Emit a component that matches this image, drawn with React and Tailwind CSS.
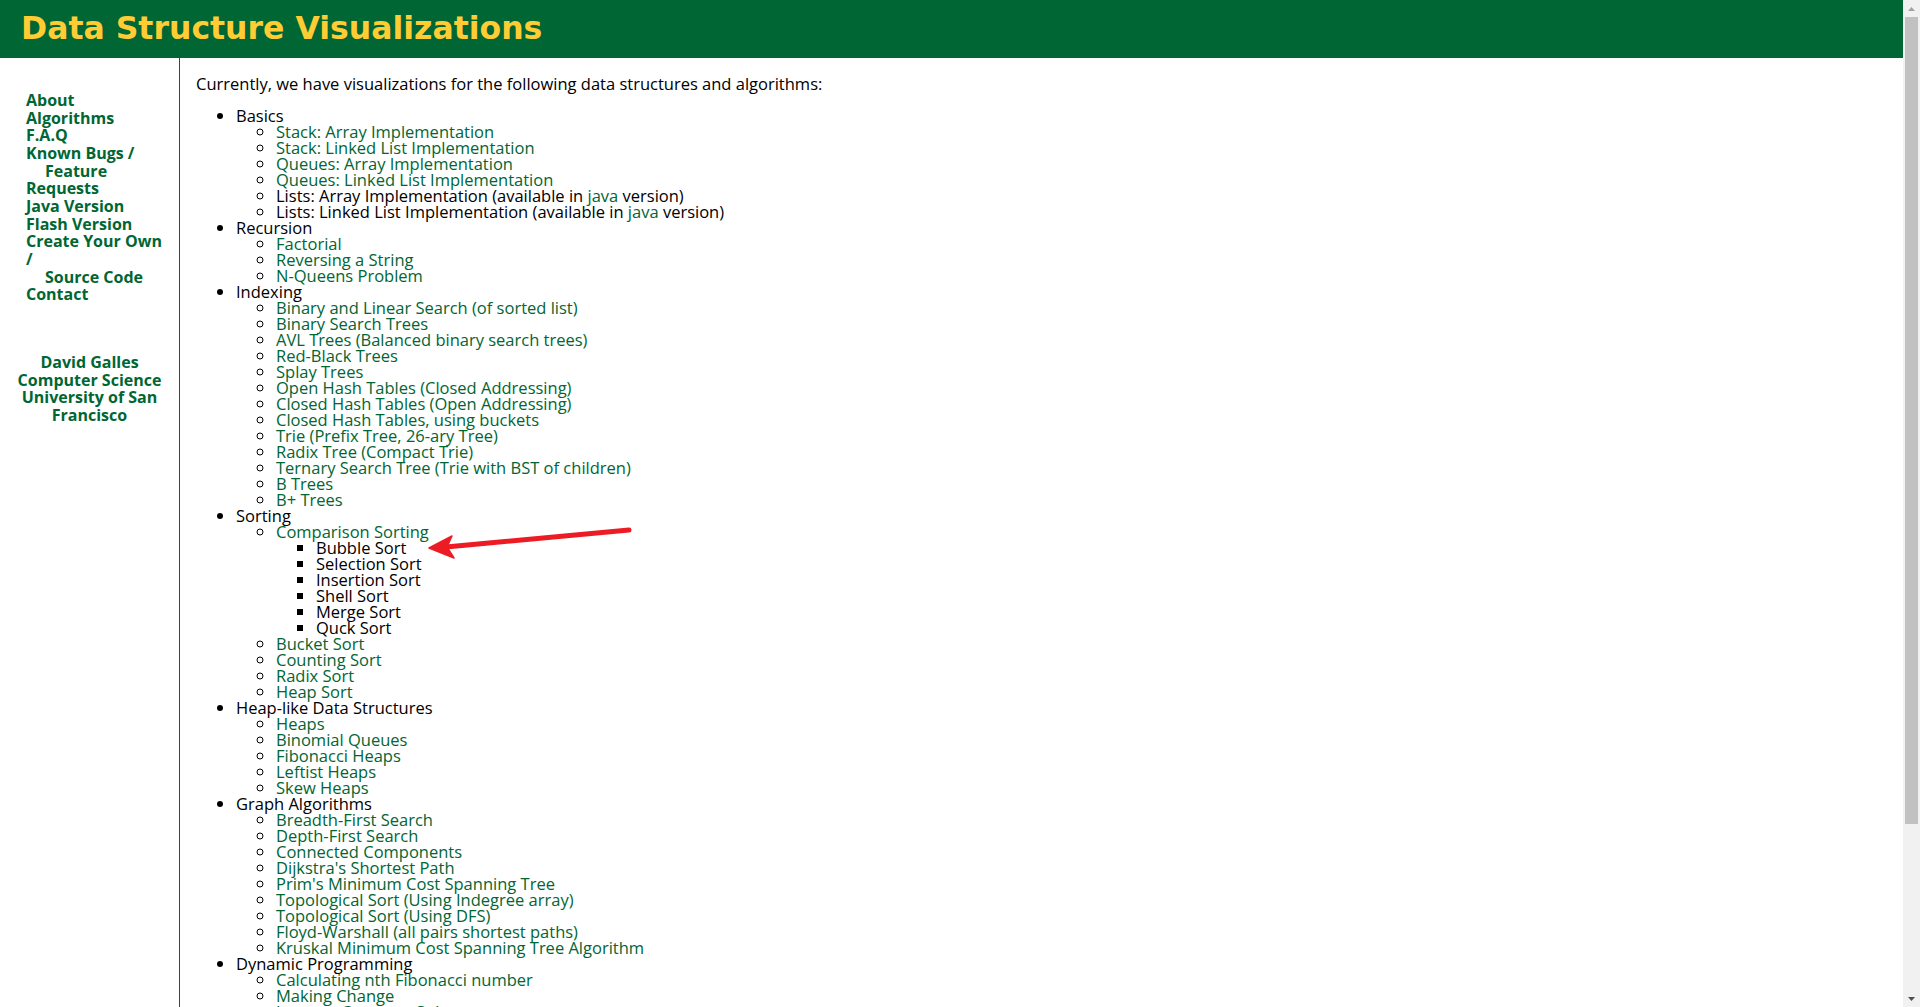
import React from 'react';

// plain strings are links, { parts: [...] } mixes black text and links
const sections = [
  {
    title: 'Basics',
    items: [
      'Stack: Array Implementation',
      'Stack: Linked List Implementation',
      'Queues: Array Implementation',
      'Queues: Linked List Implementation',
      { parts: ['Lists: Array Implementation (available in ', { link: 'java' }, ' version)'] },
      { parts: ['Lists: Linked List Implementation (available in ', { link: 'java' }, ' version)'] },
    ],
  },
  {
    title: 'Recursion',
    items: ['Factorial', 'Reversing a String', 'N-Queens Problem'],
  },
  {
    title: 'Indexing',
    items: [
      'Binary and Linear Search (of sorted list)',
      'Binary Search Trees',
      'AVL Trees (Balanced binary search trees)',
      'Red-Black Trees',
      'Splay Trees',
      'Open Hash Tables (Closed Addressing)',
      'Closed Hash Tables (Open Addressing)',
      'Closed Hash Tables, using buckets',
      'Trie (Prefix Tree, 26-ary Tree)',
      'Radix Tree (Compact Trie)',
      'Ternary Search Tree (Trie with BST of children)',
      'B Trees',
      'B+ Trees',
    ],
  },
  {
    title: 'Sorting',
    items: [
      {
        link: 'Comparison Sorting',
        sub: ['Bubble Sort', 'Selection Sort', 'Insertion Sort', 'Shell Sort', 'Merge Sort', 'Quck Sort'],
      },
      'Bucket Sort',
      'Counting Sort',
      'Radix Sort',
      'Heap Sort',
    ],
  },
  {
    title: 'Heap-like Data Structures',
    items: ['Heaps', 'Binomial Queues', 'Fibonacci Heaps', 'Leftist Heaps', 'Skew Heaps'],
  },
  {
    title: 'Graph Algorithms',
    items: [
      'Breadth-First Search',
      'Depth-First Search',
      'Connected Components',
      "Dijkstra's Shortest Path",
      "Prim's Minimum Cost Spanning Tree",
      'Topological Sort (Using Indegree array)',
      'Topological Sort (Using DFS)',
      'Floyd-Warshall (all pairs shortest paths)',
      'Kruskal Minimum Cost Spanning Tree Algorithm',
    ],
  },
  {
    title: 'Dynamic Programming',
    items: ['Calculating nth Fibonacci number', 'Making Change', 'Longest Common Subsequence'],
  },
  {
    title: 'Geometric Algorithms',
    items: ['2D Rotation and Scale Matrices', '2D Rotation and Translation Matrices'],
  },
];

const Link = ({ children }) => <a className="text-[#006633] cursor-pointer">{children}</a>;

function Item({ item }) {
  if (typeof item === 'string') {
    return <li><Link>{item}</Link></li>;
  }
  if (item.parts) {
    return (
      <li>
        {item.parts.map((p, i) => (typeof p === 'string' ? <span key={i}>{p}</span> : <Link key={i}>{p.link}</Link>))}
      </li>
    );
  }
  return (
    <li>
      <Link>{item.link}</Link>
      <ul className="list-[square] pl-10">
        {item.sub.map((s) => (
          <li key={s}>{s}</li>
        ))}
      </ul>
    </li>
  );
}

const navLinks = [
  ['About'],
  ['Algorithms'],
  ['F.A.Q'],
  ['Known Bugs /', 'Feature', 'Requests'],
  ['Java Version'],
  ['Flash Version'],
  ['Create Your Own', '/', 'Source Code'],
  ['Contact'],
];

function Sidebar() {
  return (
    <div className="w-[180px] shrink-0 border-r border-[#006633] font-['Open_Sans',sans-serif] font-bold text-[16px] leading-[17.67px] text-[#006633]">
      <div className="pt-[34px] pl-[26px]">
        {navLinks.map((lines) => (
          <a key={lines[0]} className="block cursor-pointer">
            {lines.map((l, i) => (
              <div key={i} className={(l === 'Feature' || l === 'Source Code') ? 'pl-[19px]' : ''}>{l}</div>
            ))}
          </a>
        ))}
      </div>
      <div className="mt-[50px] text-center">
        <div>David Galles</div>
        <div>Computer Science</div>
        <div>University of San</div>
        <div>Francisco</div>
      </div>
    </div>
  );
}

function Scrollbar() {
  return (
    <div className="w-[17px] shrink-0 bg-[#f1f1f1] flex flex-col">
      <div className="h-[17px] flex items-center justify-center">
        <svg width="7" height="4" viewBox="0 0 7 4"><path d="M3.5 0 L7 4 L0 4 Z" fill="#a3a3a3" /></svg>
      </div>
      <div className="flex-1 px-[2px]">
        <div className="h-[807px] bg-[#c1c1c1]" />
      </div>
      <div className="h-[17px] flex items-center justify-center">
        <svg width="7" height="4" viewBox="0 0 7 4"><path d="M0 0 L7 0 L3.5 4 Z" fill="#505050" /></svg>
      </div>
    </div>
  );
}

export default function App() {
  return (
    <div className="relative w-[1920px] h-[1007px] overflow-hidden flex bg-white">
      <div className="flex-1 flex flex-col min-w-0">
        <div className="h-[58px] shrink-0 bg-[#006633] flex items-center pl-[21px]">
          <h1 className="font-['DejaVu_Sans',sans-serif] font-bold text-[31.5px] leading-none text-[#ffcc33]">
            Data Structure Visualizations
          </h1>
        </div>
        <div className="flex flex-1 min-h-0">
          <Sidebar />
          <div className="flex-1 pl-4 font-['Open_Sans',sans-serif] text-[16.5px] leading-4 text-black">
            <p className="mt-[17.5px]">Currently, we have visualizations for the following data structures and algorithms:</p>
            <ul className="list-disc pl-10 mt-[16px]">
              {sections.map((s) => (
                <li key={s.title}>
                  {s.title}
                  <ul className="list-[circle] pl-10">
                    {s.items.map((it, i) => (
                      <Item key={i} item={it} />
                    ))}
                  </ul>
                </li>
              ))}
            </ul>
          </div>
        </div>
      </div>
      <Scrollbar />

      {/* red annotation arrow */}
      <svg className="absolute inset-0 pointer-events-none" width="1920" height="1007" viewBox="0 0 1920 1007">
        <line x1="629" y1="530" x2="446" y2="547" stroke="#ed1c24" strokeWidth="5" strokeLinecap="round" />
        <path d="M429 548 L452 536 L447 547 L454 558 Z" fill="#ed1c24" stroke="#ed1c24" strokeWidth="1.5" strokeLinejoin="round" />
      </svg>
    </div>
  );
}
